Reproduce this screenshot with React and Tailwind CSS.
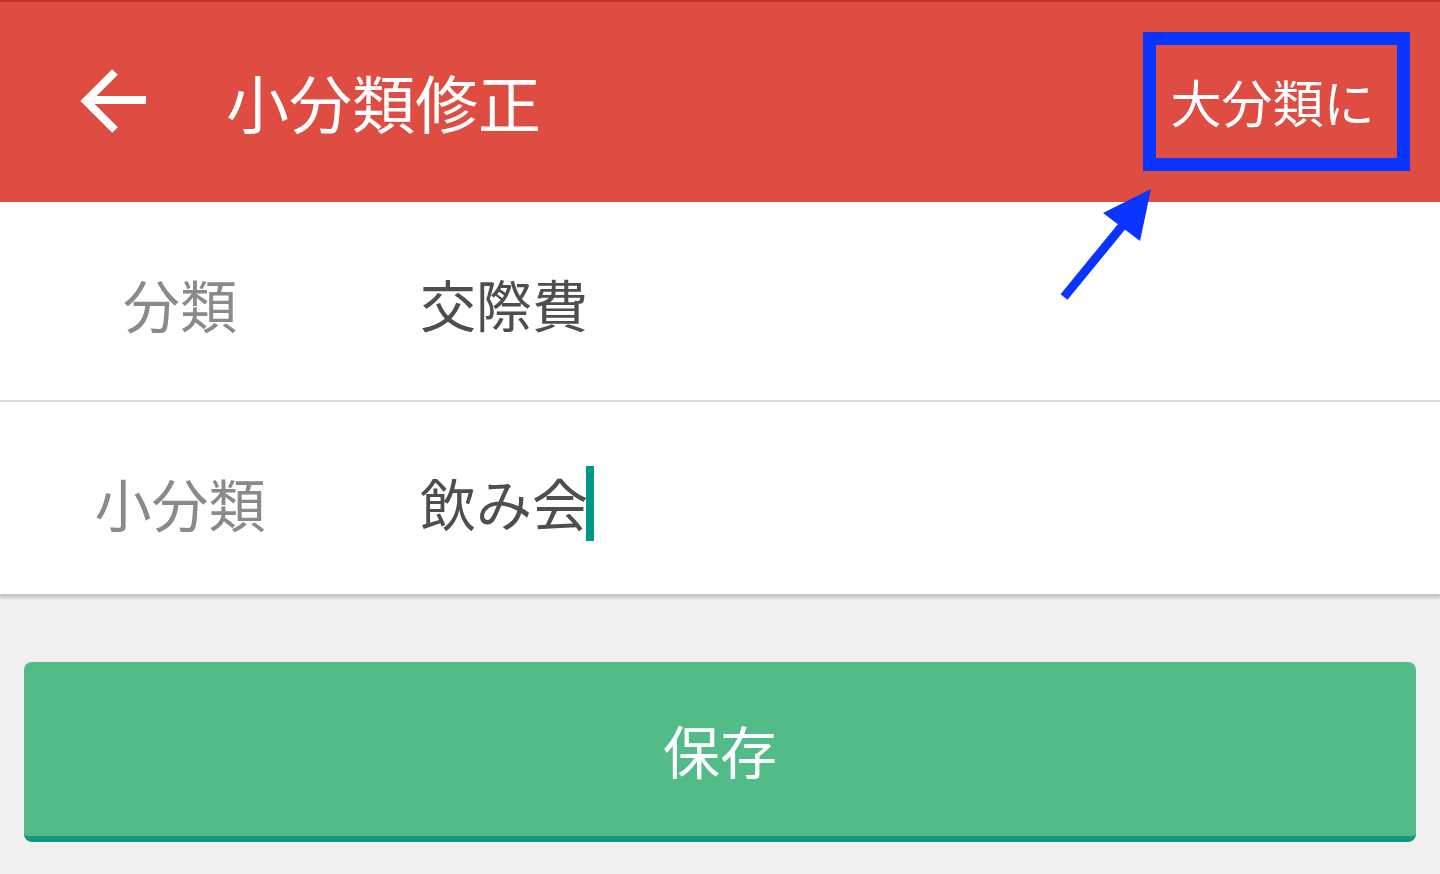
export default function App() {
  const font = { fontFamily: '"Noto Sans CJK JP", "Noto Sans", sans-serif' };

  return (
    <div className="relative w-[1440px] h-[874px] bg-[#f0f0f0] overflow-hidden" style={font}>
      {/* App bar */}
      <div className="h-[202px] bg-[#de4c42] border-t-[2px] border-[#c8302a] flex items-center justify-between">
        <div className="flex items-center">
          <svg className="ml-[78px]" width="72" height="70" viewBox="0 0 72 70" fill="none">
            <path d="M68 33H10" stroke="white" strokeWidth="8" />
            <path d="M37 5L8 34L37 63" stroke="white" strokeWidth="8" strokeLinejoin="miter" />
          </svg>
          <h1 className="ml-[76px] text-white text-[63px] leading-none font-normal pb-[4px]">小分類修正</h1>
        </div>
        <button className="mr-[30px] mb-[2px] w-[267px] h-[139px] border-[13px] border-[#0a34ff] flex items-center justify-center text-white text-[51px] leading-none pr-[8px]">
          大分類に
        </button>
      </div>

      {/* Form */}
      <div className="bg-white shadow-[0_2px_3px_rgba(0,0,0,0.18)] border-b-[2px] border-[#c9c9c9]">
        <div className="h-[200px] flex items-center border-b-[2px] border-[#d9d9d9]">
          <div className="w-[360px] text-center text-[57px] leading-none text-[#8a8a8a] pt-[4px]">分類</div>
          <div className="pl-[60px] text-[56px] leading-none text-[#4e4e4e] pt-[4px]">交際費</div>
        </div>
        <div className="h-[192px] flex items-center">
          <div className="w-[360px] text-center text-[57px] leading-none text-[#8a8a8a] pt-[8px]">小分類</div>
          <div className="pl-[60px] flex items-center text-[56px] leading-none text-[#4e4e4e] pt-[8px]">
            <span>飲み会</span>
            <span className="inline-block w-[8px] h-[75px] bg-[#009688] -ml-[2px] mt-[2px]" />
          </div>
        </div>
      </div>

      {/* Save button */}
      <div className="px-[24px] pt-[66px]">
        <button className="w-full h-[180px] rounded-[8px] bg-[#52bc89] border-b-[6px] border-[#16977b] flex items-center justify-center text-white text-[57px] leading-none">
          保存
        </button>
      </div>

      {/* Annotation arrow */}
      <svg className="absolute left-[1040px] top-[180px]" width="130" height="130" viewBox="0 0 130 130">
        <path d="M24 117L92 34" stroke="#0a34ff" strokeWidth="9" />
        <polygon points="111,9 63,33 100,61" fill="#0a34ff" />
      </svg>
    </div>
  );
}
